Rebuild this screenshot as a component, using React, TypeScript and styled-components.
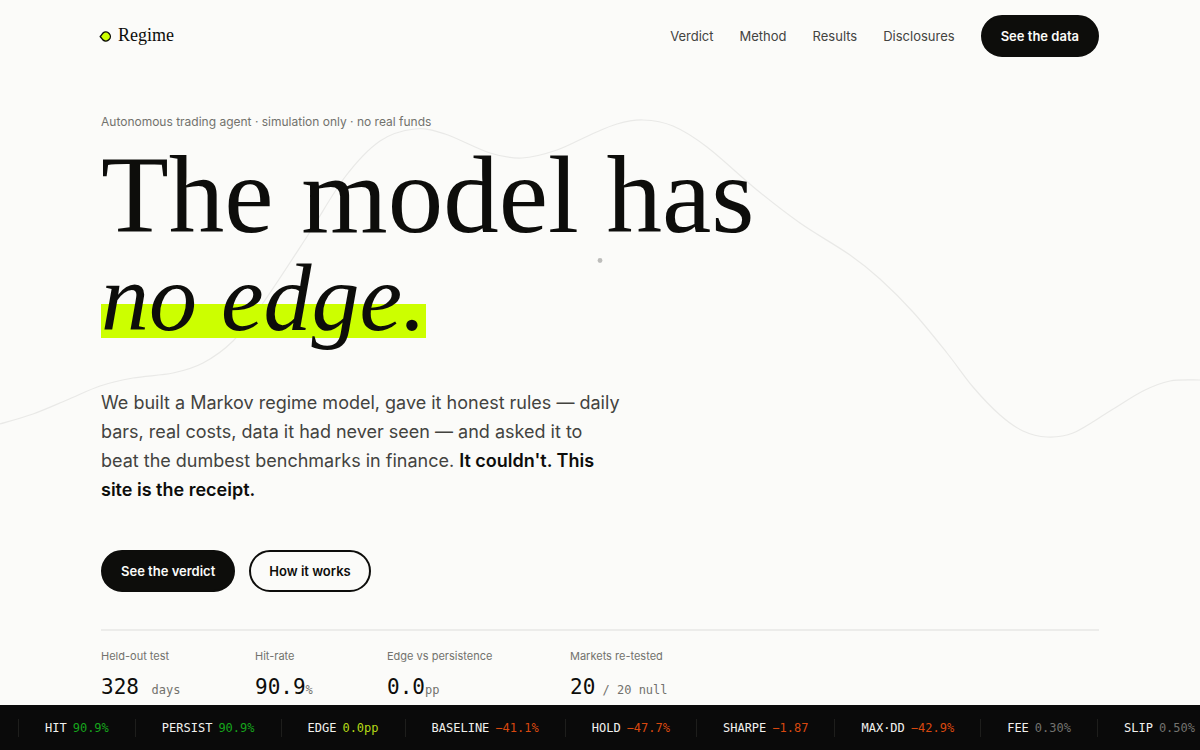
import React from "react";
import styled, { createGlobalStyle } from "styled-components";

const ink = "#0d0d0b";
const body = "#43433f";
const muted = "#72726d";
const lime = "#ccff00";
const sans = `Inter, "Liberation Sans", sans-serif`;
const serif = `"Liberation Serif", serif`;
const mono = `"DejaVu Sans Mono", "Liberation Mono", monospace`;

const GlobalStyle = createGlobalStyle`
  *, *::before, *::after { box-sizing: border-box; }
  body {
    margin: 0;
    background: #fbfbf9;
    color: ${ink};
    font-family: ${sans};
    overflow-x: hidden;
  }
`;

const Page = styled.div`
  position: relative;
  height: 100vh;
  overflow: hidden;
`;

const Backdrop = styled.svg`
  position: absolute;
  top: 0;
  left: 0;
  width: 100%;
  z-index: -1;
`;

const Header = styled.header`
  display: flex;
  align-items: center;
  justify-content: space-between;
  padding: 15px 101px 14px;
`;

const Brand = styled.a`
  display: flex;
  align-items: center;
  gap: 6px;
  margin-left: -2px;
  padding-bottom: 3px;
  color: ${ink};
  font: 18px/24px ${serif};
  text-decoration: none;
`;

const Nav = styled.nav`
  display: flex;
  align-items: center;
  gap: 26px;
`;

const NavLink = styled.a`
  color: ${body};
  font-size: 13px;
  line-height: 20px;
  text-decoration: none;
`;

const Button = styled.button<{ $outline?: boolean }>`
  height: 42px;
  padding: 0 18px;
  border: 2px solid ${ink};
  border-radius: 21px;
  background: ${(p) => (p.$outline ? "transparent" : ink)};
  color: ${(p) => (p.$outline ? ink : "#fbfbf9")};
  font: 600 13px/20px ${sans};
  cursor: pointer;
`;

const Hero = styled.main`
  padding: 41px 101px 0;
`;

const Eyebrow = styled.p`
  margin: 0;
  color: ${muted};
  font-size: 12px;
  line-height: 20px;
`;

const Title = styled.h1`
  margin: 13px 0 0;
  font: 400 111px/100px ${serif};
`;

const Line = styled.span<{ $small?: boolean }>`
  display: block;
  font-size: ${(p) => (p.$small ? "96px" : "111px")};
  line-height: ${(p) => (p.$small ? "106px" : "100px")};
`;

const Marked = styled.em`
  background: linear-gradient(transparent 56%, ${lime} 56%, ${lime} 88%, transparent 88%);
`;

const Lede = styled.p`
  max-width: 520px;
  margin: 37px 0 0;
  color: ${body};
  font-size: 18px;
  line-height: 29px;
`;

const Strong = styled.strong`
  color: ${ink};
  font-weight: 600;
`;

const Actions = styled.div`
  display: flex;
  gap: 14px;
  margin-top: 46px;
`;

const Stats = styled.dl`
  display: grid;
  grid-template-columns: 154px 132px 183px auto;
  margin: 37px 0 0;
  padding-top: 15px;
  border-top: 2px solid #ececea;
`;

const Stat = styled.div`
  white-space: pre;
`;

const StatLabel = styled.dt`
  color: ${muted};
  font-size: 11px;
  line-height: 20px;
`;

const StatValue = styled.dd`
  margin: 7px 0 0;
  font: 21px/28px ${mono};
`;

const Unit = styled.small`
  color: ${muted};
  font-size: 12px;
`;

const Ticker = styled.footer`
  position: fixed;
  right: 0;
  bottom: 0;
  left: 0;
  display: flex;
  align-items: center;
  height: 45px;
  padding-left: 18px;
  overflow: hidden;
  background: #0a0a0a;
  white-space: nowrap;
`;

const Tick = styled.div`
  display: flex;
  flex: none;
  gap: 6px;
  padding: 0 26px;
  border-left: 1px solid #1e1e1c;
  font: 12px/18px ${mono};
`;

const TickName = styled.span`
  color: #f1f1ee;
`;

const tones = { good: "#16a51c", flat: "#b5d916", bad: "#d9480f", dim: "#73736f" };

const TickValue = styled.span<{ $tone: keyof typeof tones }>`
  color: ${(p) => tones[p.$tone]};
`;

const curve: [number, number][] = [
  [0, 424], [33, 414], [67, 400], [100, 386], [133, 378], [173, 373], [203, 363], [233, 341],
  [263, 303], [308, 235], [345, 177], [380, 141], [415, 129], [445, 134], [490, 153], [522, 158],
  [557, 150], [590, 135], [617, 124], [643, 120], [673, 126], [707, 147], [757, 190], [800, 223],
  [850, 255], [880, 279], [913, 312], [947, 353], [973, 387], [1000, 415], [1023, 431],
  [1047, 437], [1073, 433], [1110, 411], [1143, 391], [1170, 381], [1200, 380],
];

// Catmull-Rom spline through the points, written as cubic segments.
function spline(points: [number, number][]) {
  let d = `M${points[0].join(" ")}`;
  for (let i = 0; i < points.length - 1; i++) {
    const a = points[Math.max(i - 1, 0)];
    const b = points[i];
    const c = points[i + 1];
    const e = points[Math.min(i + 2, points.length - 1)];
    d += `C${b[0] + (c[0] - a[0]) / 6} ${b[1] + (c[1] - a[1]) / 6} ${c[0] - (e[0] - b[0]) / 6} ${
      c[1] - (e[1] - b[1]) / 6
    } ${c[0]} ${c[1]}`;
  }
  return d;
}

const links = ["Verdict", "Method", "Results", "Disclosures"];

const stats = [
  { label: "Held-out test", value: "328", unit: "days", gap: true },
  { label: "Hit-rate", value: "90.9", unit: "%" },
  { label: "Edge vs persistence", value: "0.0", unit: "pp" },
  { label: "Markets re-tested", value: "20", unit: " / 20 null" },
];

const ticks: { name: string; value: string; tone: keyof typeof tones }[] = [
  { name: "HIT", value: "90.9%", tone: "good" },
  { name: "PERSIST", value: "90.9%", tone: "good" },
  { name: "EDGE", value: "0.0pp", tone: "flat" },
  { name: "BASELINE", value: "−41.1%", tone: "bad" },
  { name: "HOLD", value: "−47.7%", tone: "bad" },
  { name: "SHARPE", value: "−1.87", tone: "bad" },
  { name: "MAX·DD", value: "−42.9%", tone: "bad" },
  { name: "FEE", value: "0.30%", tone: "dim" },
  { name: "SLIP", value: "0.50%", tone: "dim" },
];

export default function App() {
  return (
    <Page>
      <GlobalStyle />
      <Backdrop viewBox="0 0 1200 450" fill="none" aria-hidden="true">
        <path d={spline(curve)} stroke="#e9e9e7" strokeWidth="1.2" />
        <circle cx="600" cy="260.5" r="2.4" fill="#bdbdbb" />
      </Backdrop>
      <Header>
        <Brand href="#top">
          <svg width="13" height="16" viewBox="0 -3 13 16" aria-hidden="true">
            <path
              d="M1.2 6.5C2.5 5 3 4.2 3.9 3.1A4.5 4.5 0 1 1 3.9 9.9C3 8.8 2.5 8 1.2 6.5Z"
              fill={lime}
              stroke={ink}
              strokeWidth="1.4"
              strokeLinejoin="round"
            />
          </svg>
          Regime
        </Brand>
        <Nav>
          {links.map((l) => (
            <NavLink key={l} href={`#${l.toLowerCase()}`}>{l}</NavLink>
          ))}
          <Button type="button">See the data</Button>
        </Nav>
      </Header>
      <Hero>
        <Eyebrow>Autonomous trading agent · simulation only · no real funds</Eyebrow>
        <Title>
          <Line>The model has</Line>
          <Line $small><Marked>no edge.</Marked></Line>
        </Title>
        <Lede>
          We built a Markov regime model, gave it honest rules — daily bars, real costs, data it had
          never seen — and asked it to beat the dumbest benchmarks in finance.{" "}
          <Strong>It couldn't. This site is the receipt.</Strong>
        </Lede>
        <Actions>
          <Button type="button">See the verdict</Button>
          <Button type="button" $outline>How it works</Button>
        </Actions>
        <Stats>
          {stats.map((s) => (
            <Stat key={s.label}>
              <StatLabel>{s.label}</StatLabel>
              <StatValue>
                {s.value}
                {s.gap && " "}
                <Unit>{s.unit}</Unit>
              </StatValue>
            </Stat>
          ))}
        </Stats>
      </Hero>
      <Ticker>
        {ticks.map((t) => (
          <Tick key={t.name}>
            <TickName>{t.name}</TickName>
            <TickValue $tone={t.tone}>{t.value}</TickValue>
          </Tick>
        ))}
      </Ticker>
    </Page>
  );
}
